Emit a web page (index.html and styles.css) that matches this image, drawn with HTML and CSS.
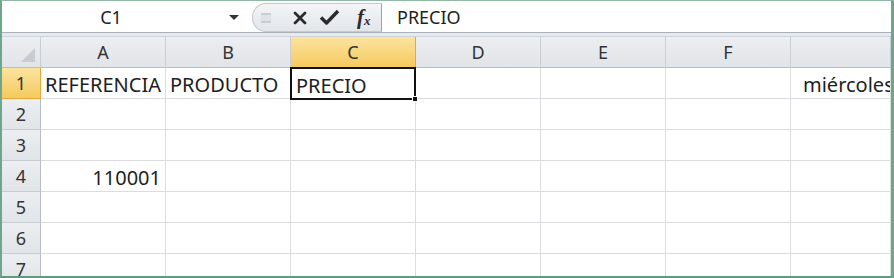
FILE: index.html
```html
<!DOCTYPE html>
<html lang="es">
  <head>
    <meta charset="UTF-8" />
    <title>Hoja1</title>
    <link rel="stylesheet" href="styles.css">
  </head>
  <body>
    <div class="ventana">
      <div class="barra">
        <div class="nombre">
          <span class="ref">C1</span>
          <span class="flecha"></span>
        </div>
        <div class="botones">
          <span class="asa"></span>
          <svg class="icono" width="16" height="16" viewBox="0 0 16 16">
            <path d="M3 3 L13 13 M13 3 L3 13" stroke="#2b2b2b" stroke-width="2.8" stroke-linecap="round" />
          </svg>
          <svg class="icono" width="21" height="17" viewBox="0 0 21 17">
            <path d="M2 8.5 L7.5 14 L19 2" stroke="#2b2b2b" stroke-width="3.4" fill="none" stroke-linejoin="round" />
          </svg>
          <span class="fx">f<sub>x</sub></span>
        </div>
        <div class="formula">PRECIO</div>
      </div>
      <div class="franja"></div>
      <div class="hoja">
        <div class="cab esquina"><span class="tri"></span></div>
        <div class="cab">A</div>
        <div class="cab">B</div>
        <div class="cab activa">C</div>
        <div class="cab">D</div>
        <div class="cab">E</div>
        <div class="cab">F</div>
        <div class="cab"></div>

        <div class="fila activa">1</div>
        <div class="celda">REFERENCIA</div>
        <div class="celda">PRODUCTO</div>
        <div class="celda sel">PRECIO<span class="tirador"></span></div>
        <div class="celda"></div>
        <div class="celda"></div>
        <div class="celda"></div>
        <div class="celda fecha">miércoles</div>

        <div class="fila">2</div>
        <div class="celda"></div><div class="celda"></div><div class="celda"></div><div class="celda"></div><div class="celda"></div><div class="celda"></div><div class="celda"></div>

        <div class="fila">3</div>
        <div class="celda"></div><div class="celda"></div><div class="celda"></div><div class="celda"></div><div class="celda"></div><div class="celda"></div><div class="celda"></div>

        <div class="fila">4</div>
        <div class="celda num">110001</div><div class="celda"></div><div class="celda"></div><div class="celda"></div><div class="celda"></div><div class="celda"></div><div class="celda"></div>

        <div class="fila">5</div>
        <div class="celda"></div><div class="celda"></div><div class="celda"></div><div class="celda"></div><div class="celda"></div><div class="celda"></div><div class="celda"></div>

        <div class="fila">6</div>
        <div class="celda"></div><div class="celda"></div><div class="celda"></div><div class="celda"></div><div class="celda"></div><div class="celda"></div><div class="celda"></div>

        <div class="fila">7</div>
        <div class="celda"></div><div class="celda"></div><div class="celda"></div><div class="celda"></div><div class="celda"></div><div class="celda"></div><div class="celda"></div>
      </div>
    </div>
  </body>
</html>
```

FILE: styles.css
```css
* { box-sizing: border-box }
body {
  margin: 0;
  font-family: "Noto Sans", "Open Sans", sans-serif;
  font-size: 20px;
  color: #1e1e1e;
}
.ventana {
  width: 894px;
  height: 278px;
  overflow: hidden;
  border-left: 2px solid #6fa58a;
  border-right: 3px solid #6fa58a;
  border-top: 1px solid #8fb9a4;
  border-bottom: 2px solid #5f9c7e;
  background: #fff;
}
.barra {
  display: flex;
  height: 32px;
  border-bottom: 1px solid #a9b0b8;
  background: #fff;
}
.nombre {
  width: 250px;
  display: flex;
  align-items: center;
  justify-content: center;
  position: relative;
}
.ref { margin-left: -32px; font-size: 18px; }
.flecha {
  position: absolute;
  right: 13px;
  top: 14px;
  border-left: 5px solid transparent;
  border-right: 5px solid transparent;
  border-top: 5px solid #333;
}
.botones {
  width: 130px;
  margin-top: 2px;
  display: flex;
  align-items: center;
  gap: 11px;
  padding-left: 8px;
  background: linear-gradient(#f3f5f7, #e2e6ea);
  border: 1px solid #c4cad1;
  border-right: 1px solid #9aa2ab;
  border-radius: 14px 0 0 14px;
}
.asa {
  width: 10px;
  height: 10px;
  margin-right: 10px;
  border-top: 2px solid #c9ced4;
  border-bottom: 2px solid #c9ced4;
  background: #dfe3e7;
}
.icono { display: block }
.fx {
  font-family: "Liberation Serif", serif;
  font-style: italic;
  font-weight: bold;
  font-size: 21px;
  color: #2b2b2b;
  margin-left: 6px;
}
.fx sub { font-size: 13px; vertical-align: -1px; }
.formula {
  flex: 1;
  display: flex;
  align-items: center;
  padding-left: 15px;
  font-size: 18px;
}
.franja {
  height: 4px;
  background: #e6e9ed;
  border-bottom: 1px solid #cfd4da;
}
.hoja {
  display: grid;
  grid-template-columns: 39px repeat(6, 125px) 1fr;
  grid-auto-rows: 31px;
}
.cab, .fila {
  display: flex;
  align-items: center;
  justify-content: center;
  background: linear-gradient(#eceef1, #e1e4e8);
  color: #333;
  font-size: 18px;
}
.cab {
  border-right: 1px solid #c9cdd3;
  border-bottom: 1px solid #b8bdc4;
}
.fila {
  border-right: 1px solid #b8bdc4;
  border-bottom: 1px solid #c9cdd3;
}
.cab.activa, .fila.activa {
  background: linear-gradient(#fbe3a0, #f5ca5e);
  border-color: #e5a93a;
}
.esquina { position: relative }
.tri {
  position: absolute;
  right: 5px;
  bottom: 5px;
  width: 0;
  height: 0;
  border-left: 14px solid transparent;
  border-bottom: 14px solid #c7ccd2;
}
.celda {
  border-right: 1px solid #dadcdf;
  border-bottom: 1px solid #dadcdf;
  display: flex;
  align-items: center;
  padding: 3px 4px 0;
  white-space: nowrap;
}
.num { justify-content: flex-end }
.fecha { padding-left: 12px; overflow: hidden; }
.sel {
  position: relative;
  border: 2px solid #111;
  margin: -1px 0 -1px -1px;
}
.tirador {
  position: absolute;
  right: -4px;
  bottom: -4px;
  width: 6px;
  height: 6px;
  background: #111;
  border: 1px solid #fff;
}
```
